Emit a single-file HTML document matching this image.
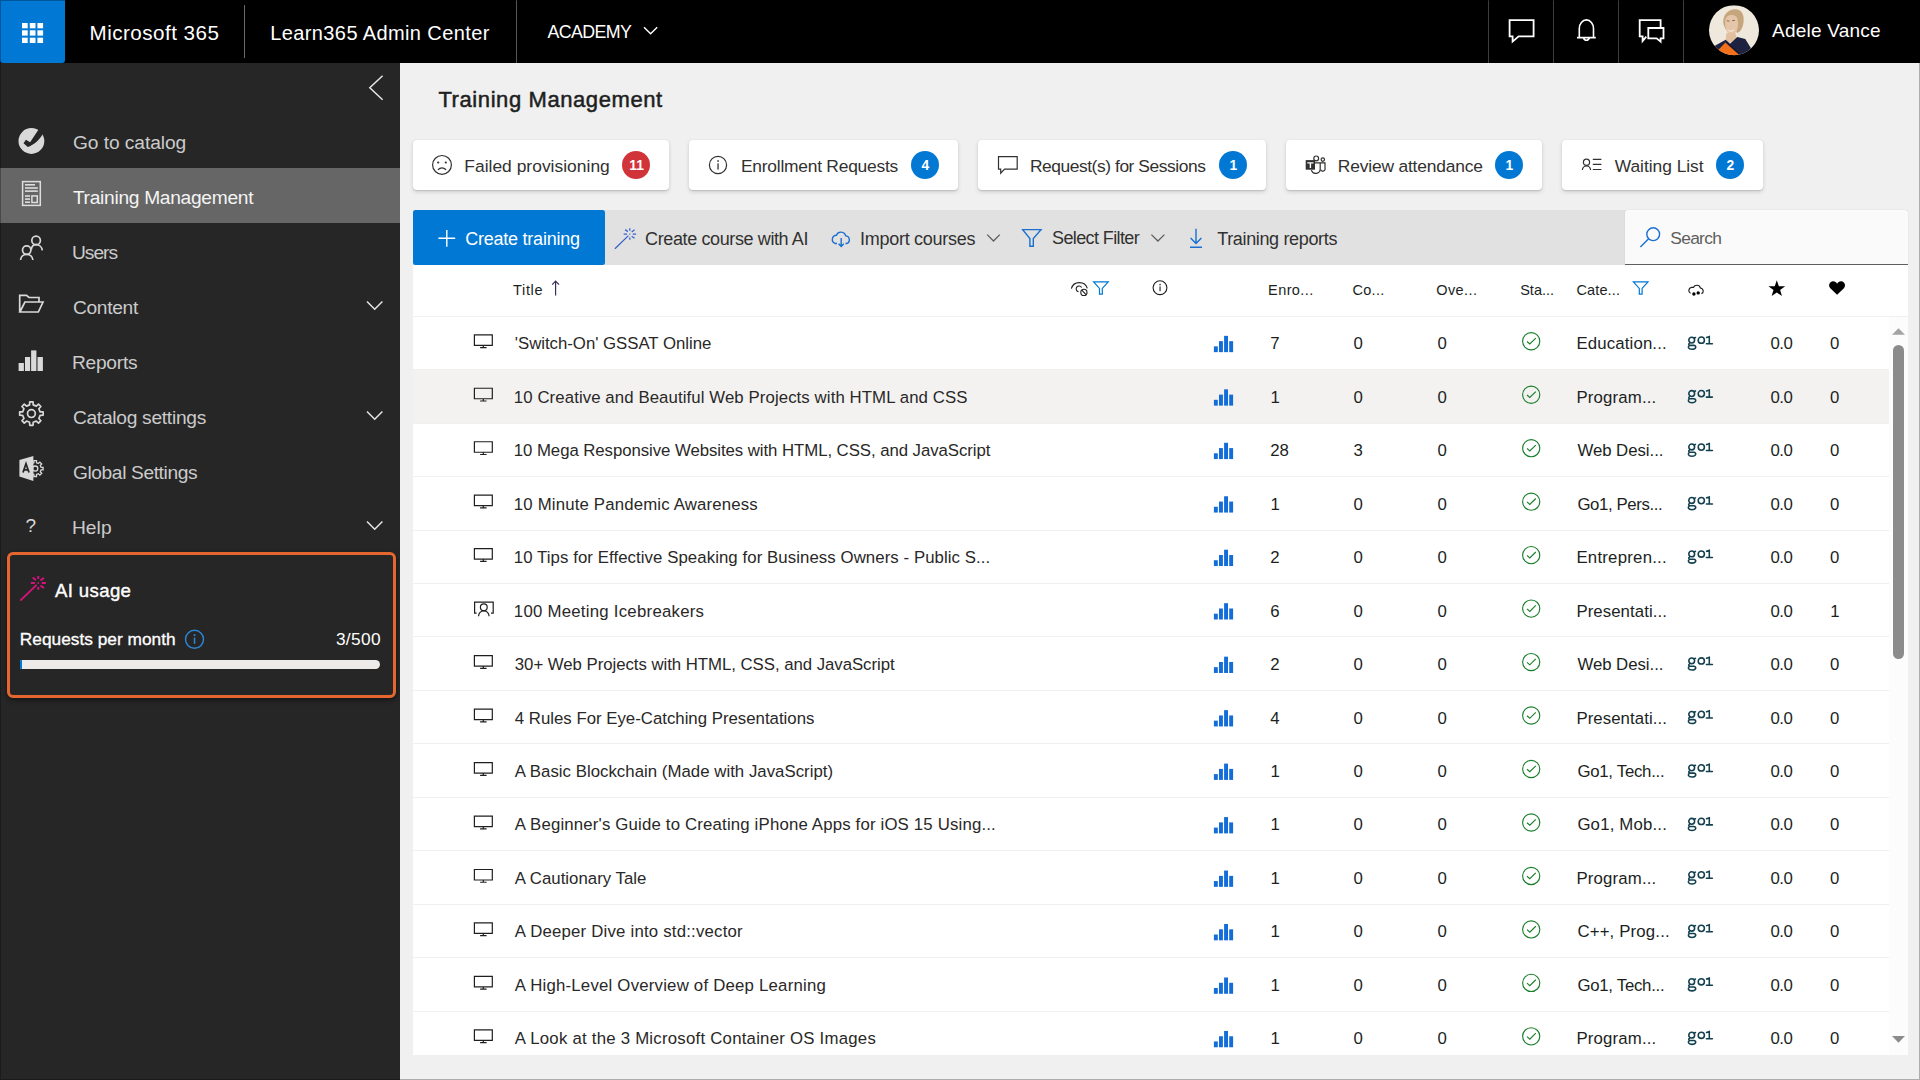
<!DOCTYPE html>
<html><head><meta charset="utf-8"><title>Training Management</title>
<style>
*{box-sizing:border-box;margin:0;padding:0}
html,body{width:1920px;height:1080px;overflow:hidden;background:#f0f0f0;font-family:"Liberation Sans",sans-serif;}
.t{position:absolute;white-space:pre;}
.a{position:absolute;}
svg{position:absolute;overflow:visible}
</style></head><body>

<div class="a" style="left:0;top:0;width:1920px;height:62.6px;background:#000"></div>
<div class="a" style="left:0;top:0;width:65px;height:62.6px;background:#0078d4;border-radius:0 0 3px 3px"></div>
<svg style="left:0;top:0" width="65" height="62"><rect x="22" y="23" width="5.7" height="5.3" fill="#fff"/><rect x="29.8" y="23" width="5.7" height="5.3" fill="#fff"/><rect x="37.4" y="23" width="5.7" height="5.3" fill="#fff"/><rect x="22" y="30.3" width="5.7" height="5.3" fill="#fff"/><rect x="29.8" y="30.3" width="5.7" height="5.3" fill="#fff"/><rect x="37.4" y="30.3" width="5.7" height="5.3" fill="#fff"/><rect x="22" y="37.7" width="5.7" height="5.3" fill="#fff"/><rect x="29.8" y="37.7" width="5.7" height="5.3" fill="#fff"/><rect x="37.4" y="37.7" width="5.7" height="5.3" fill="#fff"/></svg>
<span class="t" style="left:89.50px;top:19.36px;font-size:20.6px;line-height:27px;color:#fff;letter-spacing:0.487px;">Microsoft 365</span>
<div class="a" style="left:244px;top:5px;width:1px;height:53px;background:#6a6a6a"></div>
<span class="t" style="left:270.25px;top:19.57px;font-size:20px;line-height:26px;color:#fff;letter-spacing:0.390px;">Learn365 Admin Center</span>
<div class="a" style="left:516px;top:0;width:1px;height:62.6px;background:#555"></div>
<span class="t" style="left:547.50px;top:20.93px;font-size:17.8px;line-height:23px;color:#fff;letter-spacing:-0.596px;">ACADEMY</span>
<svg style="left:0;top:0" width="700" height="62"><path d="M644 27.3 L650.6 33.8 L657.2 27.3" fill="none" stroke="#fff" stroke-width="1.4"/></svg>
<div class="a" style="left:1488px;top:0;width:1px;height:62.6px;background:#3d3d3d"></div>
<div class="a" style="left:1553px;top:0;width:1px;height:62.6px;background:#3d3d3d"></div>
<div class="a" style="left:1618px;top:0;width:1px;height:62.6px;background:#3d3d3d"></div>
<div class="a" style="left:1683px;top:0;width:1px;height:62.6px;background:#3d3d3d"></div>
<svg style="left:0;top:0" width="1920" height="62" fill="none" stroke="#fff" stroke-width="1.8" stroke-linejoin="miter">
<path d="M1509.6 20.2 H1533.6 V36.4 H1518.6 L1512.6 41.6 V36.4 H1509.6 Z"/>
<path d="M1579.3 37.4 V28.5 A7.1 8.6 0 0 1 1593.5 28.5 V37.4 M1577 37.6 H1595.8 M1583.6 38 A2.9 3 0 0 0 1589.2 38" stroke-width="1.6"/>
<path d="M1660.6 27.6 V20.2 H1639.7 V36.4 H1642.6 V41 L1646.3 36.6 M1648.3 28 H1663.5 V38.4 H1660.6 V41.6 L1656.6 38.4 H1648.3 Z"/>
</svg>
<svg style="left:1709px;top:4.8px" width="50" height="50.4" viewBox="0 0 50 50">
<defs><clipPath id="av"><circle cx="25" cy="25" r="25"/></clipPath><filter id="bl" x="-20%" y="-20%" width="140%" height="140%"><feGaussianBlur stdDeviation="0.7"/></filter></defs>
<g clip-path="url(#av)">
<rect width="50" height="50" fill="#efe8dd"/>
<g filter="url(#bl)">
<path d="M14.5 19 C13 9 20 3.5 27 4 C33 4.5 35.5 10 34.5 17 C34 22 32 26 29 27.5 L16.5 24 Z" fill="#c6a67c"/>
<path d="M16.3 15 C17 9.5 24 8.5 27.5 11.5 C29.5 15 29.5 22 27.5 26 C25.5 29.5 21 30 18.6 27.5 C16.5 24.5 15.8 19 16.3 15Z" fill="#e6c6aa"/>
<path d="M17.5 28 L26 27 L28 33 L20 38 L16.5 35Z" fill="#e2bf9f"/>
<path d="M18.6 24.3 C20.5 26 23.5 25.8 25.3 23.6 C24.8 27 20 27.6 18.6 24.3Z" fill="#f6eee6"/>
<path d="M17.8 15.6 L20.4 15.9 M23.2 15.4 L26 15.2" stroke="#8a6b4e" stroke-width="1"/>
<path d="M5 41 L16.7 34.6 L21 38.5 L28.3 31.7 L36.3 33.7 L42 43 L36 52 L8 52 Z" fill="#1e2440"/>
<path d="M9.5 44.5 L16.9 36.8 L30 48.5 L26 53 L14 53 Z" fill="#f2701f"/>
<path d="M16.9 36.8 L30 48.5" stroke="#14182c" stroke-width="1.6"/>
</g>
</g></svg>
<span class="t" style="left:1772.00px;top:18.42px;font-size:19px;line-height:25px;color:#fff;letter-spacing:0.223px;">Adele Vance</span>
<div class="a" style="left:0;top:62.6px;width:400px;height:1018px;background:#262626;overflow:hidden"><div class="a" style="left:7px;top:489.4px;width:389px;height:146px;border:3px solid #e5662f;border-radius:6px;box-shadow:0 2px 5px rgba(0,0,0,.5)"></div></div>
<div class="a" style="left:0;top:168px;width:400px;height:55px;background:#666"></div>
<svg style="left:0;top:0" width="400" height="120"><path d="M382.6 75.8 L369.8 87.8 L382.6 99.8" fill="none" stroke="#e6e6e6" stroke-width="1.5"/></svg>
<span class="t" style="left:72.90px;top:129.75px;font-size:19.2px;line-height:25px;color:#cbcbcb;letter-spacing:-0.063px;">Go to catalog</span>
<span class="t" style="left:72.90px;top:184.75px;font-size:19.2px;line-height:25px;color:#f4f4f4;letter-spacing:-0.295px;">Training Management</span>
<span class="t" style="left:71.90px;top:239.75px;font-size:19.2px;line-height:25px;color:#cbcbcb;letter-spacing:-0.978px;">Users</span>
<span class="t" style="left:72.90px;top:294.75px;font-size:19.2px;line-height:25px;color:#cbcbcb;letter-spacing:-0.295px;">Content</span>
<span class="t" style="left:71.90px;top:349.75px;font-size:19.2px;line-height:25px;color:#cbcbcb;letter-spacing:-0.248px;">Reports</span>
<span class="t" style="left:72.90px;top:404.75px;font-size:19.2px;line-height:25px;color:#cbcbcb;letter-spacing:-0.280px;">Catalog settings</span>
<span class="t" style="left:72.90px;top:459.75px;font-size:19.2px;line-height:25px;color:#cbcbcb;letter-spacing:-0.388px;">Global Settings</span>
<span class="t" style="left:71.90px;top:514.75px;font-size:19.2px;line-height:25px;color:#cbcbcb;letter-spacing:0.103px;">Help</span>
<svg style="left:0;top:0" width="400" height="600"><path d="M367 301.5 L374.7 309.2 L382.4 301.5" fill="none" stroke="#e6e6e6" stroke-width="1.5"/></svg>
<svg style="left:0;top:0" width="400" height="600"><path d="M367 411.5 L374.7 419.2 L382.4 411.5" fill="none" stroke="#e6e6e6" stroke-width="1.5"/></svg>
<svg style="left:0;top:0" width="400" height="600"><path d="M367 521.5 L374.7 529.2 L382.4 521.5" fill="none" stroke="#e6e6e6" stroke-width="1.5"/></svg>
<svg style="left:0;top:0" width="400" height="560"><circle cx="31.4" cy="141" r="12.9" fill="#d9d9d9"/><path d="M39.4 128.2 L30.1 142.3 L25.9 139.7 L23.5 143.3 L27.8 147.1 C33.5 145 39.2 140.2 42.6 134.2 L46 131 L42 126 Z" fill="#262626"/><g fill="none" stroke="#dedede" stroke-width="1.5"><rect x="22.6" y="181.6" width="17.7" height="23.8"/></g><g fill="#dedede"><rect x="25" y="184" width="10" height="1.6"/><rect x="25" y="187.2" width="12.8" height="1.6"/><rect x="25" y="190.3" width="12.8" height="1.6"/><rect x="25" y="195.2" width="5" height="1.6"/><rect x="25" y="198.3" width="5" height="1.6"/><rect x="25" y="201.4" width="5" height="1.6"/></g><rect x="31.9" y="195.9" width="5.4" height="6.6" fill="none" stroke="#dedede" stroke-width="1.5"/><g fill="none" stroke="#d9d9d9" stroke-width="1.7"><circle cx="36.1" cy="240.4" r="4.3"/><path d="M31.3 249.5 C31.6 246.6 33.6 244.7 36.1 244.7 C39.3 244.7 42 247 42.3 250.4"/><circle cx="26.7" cy="250.1" r="4.2"/><path d="M20.5 260 C20.8 256.6 23.5 254.3 26.7 254.3 C29.9 254.3 32.6 256.6 32.9 260"/></g><path d="M19.7 312 V295.3 H26.5 L29 297.5 H39 V301.8 M19.9 312 L24.9 302 H43 L38.3 312 Z" fill="none" stroke="#d9d9d9" stroke-width="1.7" stroke-linejoin="miter"/><g fill="#d9d9d9"><rect x="18.6" y="363" width="5.3" height="8"/><rect x="25" y="357" width="5.1" height="14"/><rect x="31.1" y="350.4" width="5.3" height="20.6"/><rect x="37.5" y="357" width="5.4" height="14"/></g><path d="M29.60 404.88 L29.73 401.87 L33.07 401.87 L33.20 404.88 L36.29 406.16 L38.51 404.12 L40.88 406.49 L38.84 408.71 L40.12 411.80 L43.13 411.93 L43.13 415.27 L40.12 415.40 L38.84 418.49 L40.88 420.71 L38.51 423.08 L36.29 421.04 L33.20 422.32 L33.07 425.33 L29.73 425.33 L29.60 422.32 L26.51 421.04 L24.29 423.08 L21.92 420.71 L23.96 418.49 L22.68 415.40 L19.67 415.27 L19.67 411.93 L22.68 411.80 L23.96 408.71 L21.92 406.49 L24.29 404.12 L26.51 406.16Z" fill="none" stroke="#d9d9d9" stroke-width="1.7" stroke-linejoin="round"/><circle cx="31.4" cy="413.6" r="3.9" fill="none" stroke="#d9d9d9" stroke-width="1.7"/><g><path d="M33.85 462.75 L33.89 460.71 L36.51 460.71 L36.55 462.75 L38.38 463.51 L39.85 462.09 L41.71 463.95 L40.29 465.42 L41.05 467.25 L43.09 467.29 L43.09 469.91 L41.05 469.95 L40.29 471.78 L41.71 473.25 L39.85 475.11 L38.38 473.69 L36.55 474.45 L36.51 476.49 L33.89 476.49 L33.85 474.45 L32.02 473.69 L30.55 475.11 L28.69 473.25 L30.11 471.78 L29.35 469.95 L27.31 469.91 L27.31 467.29 L29.35 467.25 L30.11 465.42 L28.69 463.95 L30.55 462.09 L32.02 463.51Z" fill="none" stroke="#d9d9d9" stroke-width="1.3"/><circle cx="35.2" cy="468.6" r="2.6" fill="none" stroke="#d9d9d9" stroke-width="1.3"/><path d="M19.4 460 L33.4 456 V481 L19.4 476.4Z" fill="#d9d9d9"/><path d="M23 472.5 L26 463.8 L29 472.5 M24.1 469.8 H27.9" fill="none" stroke="#262626" stroke-width="1.8"/></g></svg><span class="t" style="left:25.6px;top:512.5px;font-size:19px;line-height:25px;color:#d9d9d9">?</span>
<svg style="left:0;top:0" width="400" height="700"><path d="M20.30 600.60 L36.60 584.85 M38.26 576.00 L38.26 578.90 M38.26 587.10 L38.26 589.85 M30.85 583.00 L34.90 583.00 M41.80 583.00 L45.85 583.00 M32.70 577.60 L35.85 580.00 M44.00 577.80 L40.50 580.40 M40.50 585.60 L44.00 588.00 M37.60 583.00 L38.90 583.00" stroke="#d8127d" stroke-width="1.9" fill="none"/></svg>
<span class="t" style="left:55.10px;top:579.46px;font-size:18.6px;line-height:24px;color:#fff;letter-spacing:0.349px;-webkit-text-stroke:0.4px #fff;">AI usage</span>
<span class="t" style="left:19.80px;top:628.11px;font-size:17.3px;line-height:22px;color:#fff;letter-spacing:0.011px;-webkit-text-stroke:0.32px #fff;">Requests per month</span>
<svg style="left:0;top:0" width="400" height="700"><circle cx="194.5" cy="639.3" r="9" fill="none" stroke="#2b88d8" stroke-width="1.4"/><rect x="193.8" y="637.5" width="1.5" height="6.3" fill="#2b88d8"/><rect x="193.7" y="634.2" width="1.7" height="1.8" fill="#2b88d8"/></svg>
<span class="t" style="left:335.90px;top:628.11px;font-size:17.3px;line-height:22px;color:#fff;letter-spacing:0.366px;">3/500</span>
<div class="a" style="left:20px;top:660px;width:360px;height:9px;border-radius:1px 4.5px 4.5px 1px;background:#edebe9;overflow:hidden"><div style="width:2.2px;height:9px;background:#0078d4"></div></div>
<span class="t" style="left:438.40px;top:84.78px;font-size:22px;line-height:29px;color:#201f1e;letter-spacing:0.590px;-webkit-text-stroke:0.5px #201f1e;">Training Management</span>
<div class="a" style="left:413px;top:140px;width:256px;height:49.7px;background:#fff;border-radius:4px;box-shadow:0 2px 4.5px rgba(0,0,0,.14),0 .4px 1.1px rgba(0,0,0,.11)"></div>
<span class="t" style="left:464.30px;top:154.87px;font-size:17.4px;line-height:23px;color:#323130;letter-spacing:0.026px;">Failed provisioning</span>
<div class="a" style="left:622px;top:151px;width:28px;height:28px;border-radius:14px;background:#d13438"></div>
<span class="t" style="left:629.30px;top:156.52px;font-size:13.8px;line-height:18px;color:#fff;font-weight:700;">11</span>
<div class="a" style="left:689px;top:140px;width:269px;height:49.7px;background:#fff;border-radius:4px;box-shadow:0 2px 4.5px rgba(0,0,0,.14),0 .4px 1.1px rgba(0,0,0,.11)"></div>
<span class="t" style="left:741.00px;top:154.87px;font-size:17.4px;line-height:23px;color:#323130;letter-spacing:-0.235px;">Enrollment Requests</span>
<div class="a" style="left:911px;top:151px;width:28px;height:28px;border-radius:14px;background:#0078d4"></div>
<span class="t" style="left:921.55px;top:156.52px;font-size:13.8px;line-height:18px;color:#fff;font-weight:700;">4</span>
<div class="a" style="left:978px;top:140px;width:288px;height:49.7px;background:#fff;border-radius:4px;box-shadow:0 2px 4.5px rgba(0,0,0,.14),0 .4px 1.1px rgba(0,0,0,.11)"></div>
<span class="t" style="left:1029.90px;top:154.87px;font-size:17.4px;line-height:23px;color:#323130;letter-spacing:-0.435px;">Request(s) for Sessions</span>
<div class="a" style="left:1219px;top:151px;width:28px;height:28px;border-radius:14px;background:#0078d4"></div>
<span class="t" style="left:1229.55px;top:156.52px;font-size:13.8px;line-height:18px;color:#fff;font-weight:700;">1</span>
<div class="a" style="left:1286px;top:140px;width:256px;height:49.7px;background:#fff;border-radius:4px;box-shadow:0 2px 4.5px rgba(0,0,0,.14),0 .4px 1.1px rgba(0,0,0,.11)"></div>
<span class="t" style="left:1337.80px;top:154.87px;font-size:17.4px;line-height:23px;color:#323130;letter-spacing:-0.171px;">Review attendance</span>
<div class="a" style="left:1495px;top:151px;width:28px;height:28px;border-radius:14px;background:#0078d4"></div>
<span class="t" style="left:1505.55px;top:156.52px;font-size:13.8px;line-height:18px;color:#fff;font-weight:700;">1</span>
<div class="a" style="left:1562px;top:140px;width:201px;height:49.7px;background:#fff;border-radius:4px;box-shadow:0 2px 4.5px rgba(0,0,0,.14),0 .4px 1.1px rgba(0,0,0,.11)"></div>
<span class="t" style="left:1614.70px;top:154.87px;font-size:17.4px;line-height:23px;color:#323130;letter-spacing:-0.028px;">Waiting List</span>
<div class="a" style="left:1716px;top:151px;width:28px;height:28px;border-radius:14px;background:#0078d4"></div>
<span class="t" style="left:1726.55px;top:156.52px;font-size:13.8px;line-height:18px;color:#fff;font-weight:700;">2</span>
<svg style="left:0;top:0" width="1920" height="200" fill="none" stroke="#323130" stroke-width="1.2"><circle cx="442" cy="164.9" r="9.4"/><circle cx="438.2" cy="162.5" r="1.1" fill="#323130" stroke="none"/><circle cx="445.8" cy="162.5" r="1.1" fill="#323130" stroke="none"/><path d="M437.9 169.7 Q442 165.9 446.1 169.7"/><circle cx="718" cy="165" r="8.6"/><rect x="717.4" y="163.4" width="1.3" height="6.2" fill="#323130" stroke="none"/><rect x="717.3" y="160.2" width="1.5" height="1.6" fill="#323130" stroke="none"/><path d="M998.5 156.6 H1017.2 V169.1 H1004.6 L1000.7 173.2 V169.1 H998.5 Z"/><rect x="1305.7" y="160.1" width="9.3" height="9.6" fill="#323130" stroke="none"/><path d="M1307.3 162.9 H1313.5 M1310.4 162.9 V168" stroke="#fff" stroke-width="1.4"/><circle cx="1316.2" cy="158.4" r="2.4"/><circle cx="1322.8" cy="159.6" r="1.7"/><path d="M1315 162.9 H1320.2 V168.6 A4.5 4.5 0 0 1 1311.4 170.2"/><path d="M1320.4 162.9 H1325 V168 A2.3 2.3 0 0 1 1320.6 169.6"/><circle cx="1586.5" cy="162.3" r="3.1"/><path d="M1582.4 170 C1582.6 167.4 1584.3 166 1586.5 166 C1588.7 166 1590.3 167.4 1590.6 170"/><path d="M1592.8 159.4 H1601.4 M1592.8 164.4 H1601.4 M1592.8 169.5 H1601.4"/></svg>
<div class="a" style="left:413px;top:210px;width:1495px;height:54.7px;background:#e1e1e1"></div>
<div class="a" style="left:413px;top:210px;width:192px;height:54.7px;background:#0078d4;border-radius:2.5px"></div>
<svg style="left:0;top:0" width="700" height="300"><path d="M438.4 238.3 H455.2 M446.8 229.9 V246.7" stroke="#fff" stroke-width="1.4" fill="none"/></svg>
<span class="t" style="left:465.20px;top:228.06px;font-size:18px;line-height:23px;color:#fff;letter-spacing:-0.232px;">Create training</span>
<span class="t" style="left:645.10px;top:228.06px;font-size:18px;line-height:23px;color:#323130;letter-spacing:-0.384px;">Create course with AI</span>
<span class="t" style="left:860.10px;top:228.06px;font-size:18px;line-height:23px;color:#323130;letter-spacing:-0.288px;">Import courses</span>
<span class="t" style="left:1052.00px;top:227.46px;font-size:18px;line-height:23px;color:#323130;letter-spacing:-0.611px;">Select Filter</span>
<span class="t" style="left:1217.20px;top:228.06px;font-size:18px;line-height:23px;color:#323130;letter-spacing:-0.346px;">Training reports</span>
<div class="a" style="left:1625px;top:210px;width:283px;height:54.7px;background:#fafafa;border-radius:3px 3px 0 0;border-bottom:1.4px solid #605e5c;box-shadow:0 0 2px rgba(0,0,0,.08)"></div>
<span class="t" style="left:1670.30px;top:226.87px;font-size:17.4px;line-height:23px;color:#605e5c;letter-spacing:-0.706px;">Search</span>
<svg style="left:0;top:0" width="1920" height="300" fill="none"><path d="M614.90 248.72 L628.43 235.65 M629.81 228.30 L629.81 230.71 M629.81 237.51 L629.81 239.80 M623.66 234.11 L627.02 234.11 M632.75 234.11 L636.11 234.11 M625.19 229.63 L627.81 231.62 M634.57 229.79 L631.67 231.95 M631.67 236.27 L634.57 238.26 M629.26 234.11 L630.34 234.11" stroke="#3a63c9" stroke-width="1.3" fill="none"/><g stroke="#1a6fd0" stroke-width="1.4"><path d="M837 243.5 H835.3 A4.25 4.25 0 0 1 836.4 235.2 A4.9 4.9 0 0 1 845.7 235.9 A3.85 3.85 0 0 1 846.3 243.5 H845.5 M841.2 238 V246.3 M838.6 243.8 L841.2 246.4 L843.8 243.8"/><path d="M1022.7 229.6 H1041 L1033.3 238.5 V246.3 H1029.9 V238.5 Z"/><path d="M1196 228.7 V243.3 M1190.6 238 L1196 243.5 L1201.4 238 M1190 247.2 H1202"/><circle cx="1653.2" cy="234.2" r="6.4"/><path d="M1648.6 238.8 L1640.4 247"/></g><g stroke="#605e5c" stroke-width="1.3"><path d="M987.2 234.6 L993.5 241 L999.8 234.6"/><path d="M1151.4 234.6 L1157.9 241 L1164.4 234.6"/></g></svg>
<div class="a" style="left:413px;top:264.7px;width:1495px;height:790.3px;background:#fff"></div>
<div class="a" style="left:1889px;top:316px;width:19px;height:739px;background:#fcfcfc"></div>
<span class="t" style="left:513.10px;top:280.68px;font-size:14.5px;line-height:19px;color:#201f1e;letter-spacing:0.652px;">Title</span>
<span class="t" style="left:1268.10px;top:280.68px;font-size:14.5px;line-height:19px;color:#201f1e;letter-spacing:0.402px;">Enro...</span>
<span class="t" style="left:1352.50px;top:280.68px;font-size:14.5px;line-height:19px;color:#201f1e;letter-spacing:0.277px;">Co...</span>
<span class="t" style="left:1436.30px;top:280.68px;font-size:14.5px;line-height:19px;color:#201f1e;letter-spacing:0.390px;">Ove...</span>
<span class="t" style="left:1520.20px;top:280.68px;font-size:14.5px;line-height:19px;color:#201f1e;letter-spacing:-0.004px;">Sta...</span>
<span class="t" style="left:1576.50px;top:280.68px;font-size:14.5px;line-height:19px;color:#201f1e;letter-spacing:0.119px;">Cate...</span>
<svg style="left:0;top:0" width="1920" height="320" fill="none"><path d="M555.6 295.6 V281 M552.2 284.6 L555.6 281.1 L559 284.6" stroke="#3b2e58" stroke-width="1.2"/><g stroke="#201f1e" stroke-width="1.1"><path d="M1071.4 288.6 C1072.4 284.8 1075.6 282.6 1079.3 282.6 C1083 282.6 1086.3 284.8 1087.3 288.4"/><path d="M1081.6 287.4 A2.9 2.9 0 1 0 1078.6 291.7"/><circle cx="1083.9" cy="292.4" r="3.1"/><path d="M1081.8 290.2 L1086 294.6"/></g><path d="M1093.6 281.8 H1108.2 L1102.3 288.4 V294.2 H1099.5 V288.4 Z" stroke="#0078d4" stroke-width="1.2"/><path d="M1633.3999999999999 281.8 H1648.0 L1642.1 288.4 V294.2 H1639.3 V288.4 Z" stroke="#0078d4" stroke-width="1.2"/><circle cx="1160" cy="287.7" r="6.9" stroke="#201f1e" stroke-width="1.1"/><rect x="1159.5" y="286.4" width="1.1" height="4.8" fill="#201f1e"/><rect x="1159.4" y="283.9" width="1.3" height="1.4" fill="#201f1e"/><path d="M1690.6 293.3 C1688.2 292.2 1688 288.2 1691.4 287.4 L1693.4 287.4 C1694.6 284.6 1699.6 284.4 1700.3 287.8 C1703.8 288.6 1704.2 292.4 1701.4 293.6" stroke="#201f1e" stroke-width="1.2"/><circle cx="1693.9" cy="294" r="1.7" fill="#000"/><circle cx="1698.2" cy="292.9" r="1.7" fill="#000"/><path d="M1776.80 280.20 L1778.86 286.17 L1785.17 286.28 L1780.13 290.08 L1781.97 296.12 L1776.80 292.50 L1771.63 296.12 L1773.47 290.08 L1768.43 286.28 L1774.74 286.17Z" fill="#000"/><path d="M1837.1 294.8 L1830.3 288.2 C1827.6 285.2 1830 281 1833.2 281.2 C1835 281.3 1836.4 282.4 1837.1 283.8 C1837.8 282.4 1839.2 281.3 1841 281.2 C1844.2 281 1846.6 285.2 1843.9 288.2 Z" fill="#000"/></svg>
<div class="a" style="left:413px;top:264.7px;width:1495px;height:790.3px;overflow:hidden">
<div class="a" style="left:0;top:104.42px;width:1476px;height:53.47px;background:#f3f2f1"></div>
<div class="a" style="left:0;top:50.95px;width:1495px;height:1px;background:#f1f0ef"></div>
<div class="a" style="left:0;top:104.42px;width:1476px;height:1px;background:#f1f0ef"></div>
<div class="a" style="left:0;top:157.89px;width:1476px;height:1px;background:#f1f0ef"></div>
<div class="a" style="left:0;top:211.36px;width:1476px;height:1px;background:#f1f0ef"></div>
<div class="a" style="left:0;top:264.83px;width:1476px;height:1px;background:#f1f0ef"></div>
<div class="a" style="left:0;top:318.30px;width:1476px;height:1px;background:#f1f0ef"></div>
<div class="a" style="left:0;top:371.77px;width:1476px;height:1px;background:#f1f0ef"></div>
<div class="a" style="left:0;top:425.24px;width:1476px;height:1px;background:#f1f0ef"></div>
<div class="a" style="left:0;top:478.71px;width:1476px;height:1px;background:#f1f0ef"></div>
<div class="a" style="left:0;top:532.18px;width:1476px;height:1px;background:#f1f0ef"></div>
<div class="a" style="left:0;top:585.65px;width:1476px;height:1px;background:#f1f0ef"></div>
<div class="a" style="left:0;top:639.12px;width:1476px;height:1px;background:#f1f0ef"></div>
<div class="a" style="left:0;top:692.59px;width:1476px;height:1px;background:#f1f0ef"></div>
<div class="a" style="left:0;top:746.06px;width:1476px;height:1px;background:#f1f0ef"></div>
<div class="a" style="left:0;top:799.53px;width:1476px;height:1px;background:#f1f0ef"></div>
</div>
<span class="t" style="left:514.80px;top:333.23px;font-size:16.8px;line-height:22px;color:#292827;letter-spacing:-0.019px;">&#x27;Switch-On&#x27; GSSAT Online</span>
<span class="t" style="left:1270.20px;top:333.23px;font-size:16.8px;line-height:22px;color:#201f1e;">7</span>
<span class="t" style="left:1353.50px;top:333.23px;font-size:16.8px;line-height:22px;color:#201f1e;">0</span>
<span class="t" style="left:1437.50px;top:333.23px;font-size:16.8px;line-height:22px;color:#201f1e;">0</span>
<span class="t" style="left:1576.40px;top:333.23px;font-size:16.8px;line-height:22px;color:#201f1e;letter-spacing:0.149px;">Education...</span>
<span class="t" style="left:1770.40px;top:333.23px;font-size:16.8px;line-height:22px;color:#201f1e;letter-spacing:-0.448px;">0.0</span>
<span class="t" style="left:1830.00px;top:333.23px;font-size:16.8px;line-height:22px;color:#201f1e;">0</span>
<span class="t" style="left:513.80px;top:386.70px;font-size:16.8px;line-height:22px;color:#292827;letter-spacing:0.091px;">10 Creative and Beautiful Web Projects with HTML and CSS</span>
<span class="t" style="left:1270.50px;top:386.70px;font-size:16.8px;line-height:22px;color:#201f1e;">1</span>
<span class="t" style="left:1353.50px;top:386.70px;font-size:16.8px;line-height:22px;color:#201f1e;">0</span>
<span class="t" style="left:1437.50px;top:386.70px;font-size:16.8px;line-height:22px;color:#201f1e;">0</span>
<span class="t" style="left:1576.40px;top:386.70px;font-size:16.8px;line-height:22px;color:#201f1e;letter-spacing:0.170px;">Program...</span>
<span class="t" style="left:1770.40px;top:386.70px;font-size:16.8px;line-height:22px;color:#201f1e;letter-spacing:-0.448px;">0.0</span>
<span class="t" style="left:1830.00px;top:386.70px;font-size:16.8px;line-height:22px;color:#201f1e;">0</span>
<span class="t" style="left:513.80px;top:440.17px;font-size:16.8px;line-height:22px;color:#292827;letter-spacing:-0.061px;">10 Mega Responsive Websites with HTML, CSS, and JavaScript</span>
<span class="t" style="left:1270.20px;top:440.17px;font-size:16.8px;line-height:22px;color:#201f1e;">28</span>
<span class="t" style="left:1353.50px;top:440.17px;font-size:16.8px;line-height:22px;color:#201f1e;">3</span>
<span class="t" style="left:1437.50px;top:440.17px;font-size:16.8px;line-height:22px;color:#201f1e;">0</span>
<span class="t" style="left:1577.40px;top:440.17px;font-size:16.8px;line-height:22px;color:#201f1e;letter-spacing:-0.036px;">Web Desi...</span>
<span class="t" style="left:1770.40px;top:440.17px;font-size:16.8px;line-height:22px;color:#201f1e;letter-spacing:-0.448px;">0.0</span>
<span class="t" style="left:1830.00px;top:440.17px;font-size:16.8px;line-height:22px;color:#201f1e;">0</span>
<span class="t" style="left:513.80px;top:493.64px;font-size:16.8px;line-height:22px;color:#292827;letter-spacing:0.168px;">10 Minute Pandemic Awareness</span>
<span class="t" style="left:1270.50px;top:493.64px;font-size:16.8px;line-height:22px;color:#201f1e;">1</span>
<span class="t" style="left:1353.50px;top:493.64px;font-size:16.8px;line-height:22px;color:#201f1e;">0</span>
<span class="t" style="left:1437.50px;top:493.64px;font-size:16.8px;line-height:22px;color:#201f1e;">0</span>
<span class="t" style="left:1577.40px;top:493.64px;font-size:16.8px;line-height:22px;color:#201f1e;letter-spacing:-0.388px;">Go1, Pers...</span>
<span class="t" style="left:1770.40px;top:493.64px;font-size:16.8px;line-height:22px;color:#201f1e;letter-spacing:-0.448px;">0.0</span>
<span class="t" style="left:1830.00px;top:493.64px;font-size:16.8px;line-height:22px;color:#201f1e;">0</span>
<span class="t" style="left:513.80px;top:547.11px;font-size:16.8px;line-height:22px;color:#292827;letter-spacing:0.076px;">10 Tips for Effective Speaking for Business Owners - Public S...</span>
<span class="t" style="left:1270.20px;top:547.11px;font-size:16.8px;line-height:22px;color:#201f1e;">2</span>
<span class="t" style="left:1353.50px;top:547.11px;font-size:16.8px;line-height:22px;color:#201f1e;">0</span>
<span class="t" style="left:1437.50px;top:547.11px;font-size:16.8px;line-height:22px;color:#201f1e;">0</span>
<span class="t" style="left:1576.40px;top:547.11px;font-size:16.8px;line-height:22px;color:#201f1e;letter-spacing:0.234px;">Entrepren...</span>
<span class="t" style="left:1770.40px;top:547.11px;font-size:16.8px;line-height:22px;color:#201f1e;letter-spacing:-0.448px;">0.0</span>
<span class="t" style="left:1830.00px;top:547.11px;font-size:16.8px;line-height:22px;color:#201f1e;">0</span>
<span class="t" style="left:513.80px;top:600.58px;font-size:16.8px;line-height:22px;color:#292827;letter-spacing:0.250px;">100 Meeting Icebreakers</span>
<span class="t" style="left:1270.20px;top:600.58px;font-size:16.8px;line-height:22px;color:#201f1e;">6</span>
<span class="t" style="left:1353.50px;top:600.58px;font-size:16.8px;line-height:22px;color:#201f1e;">0</span>
<span class="t" style="left:1437.50px;top:600.58px;font-size:16.8px;line-height:22px;color:#201f1e;">0</span>
<span class="t" style="left:1576.40px;top:600.58px;font-size:16.8px;line-height:22px;color:#201f1e;letter-spacing:0.077px;">Presentati...</span>
<span class="t" style="left:1770.40px;top:600.58px;font-size:16.8px;line-height:22px;color:#201f1e;letter-spacing:-0.448px;">0.0</span>
<span class="t" style="left:1830.30px;top:600.58px;font-size:16.8px;line-height:22px;color:#201f1e;">1</span>
<span class="t" style="left:514.80px;top:654.05px;font-size:16.8px;line-height:22px;color:#292827;letter-spacing:-0.038px;">30+ Web Projects with HTML, CSS, and JavaScript</span>
<span class="t" style="left:1270.20px;top:654.05px;font-size:16.8px;line-height:22px;color:#201f1e;">2</span>
<span class="t" style="left:1353.50px;top:654.05px;font-size:16.8px;line-height:22px;color:#201f1e;">0</span>
<span class="t" style="left:1437.50px;top:654.05px;font-size:16.8px;line-height:22px;color:#201f1e;">0</span>
<span class="t" style="left:1577.40px;top:654.05px;font-size:16.8px;line-height:22px;color:#201f1e;letter-spacing:-0.036px;">Web Desi...</span>
<span class="t" style="left:1770.40px;top:654.05px;font-size:16.8px;line-height:22px;color:#201f1e;letter-spacing:-0.448px;">0.0</span>
<span class="t" style="left:1830.00px;top:654.05px;font-size:16.8px;line-height:22px;color:#201f1e;">0</span>
<span class="t" style="left:514.80px;top:707.52px;font-size:16.8px;line-height:22px;color:#292827;letter-spacing:0.005px;">4 Rules For Eye-Catching Presentations</span>
<span class="t" style="left:1270.20px;top:707.52px;font-size:16.8px;line-height:22px;color:#201f1e;">4</span>
<span class="t" style="left:1353.50px;top:707.52px;font-size:16.8px;line-height:22px;color:#201f1e;">0</span>
<span class="t" style="left:1437.50px;top:707.52px;font-size:16.8px;line-height:22px;color:#201f1e;">0</span>
<span class="t" style="left:1576.40px;top:707.52px;font-size:16.8px;line-height:22px;color:#201f1e;letter-spacing:0.077px;">Presentati...</span>
<span class="t" style="left:1770.40px;top:707.52px;font-size:16.8px;line-height:22px;color:#201f1e;letter-spacing:-0.448px;">0.0</span>
<span class="t" style="left:1830.00px;top:707.52px;font-size:16.8px;line-height:22px;color:#201f1e;">0</span>
<span class="t" style="left:514.80px;top:760.99px;font-size:16.8px;line-height:22px;color:#292827;letter-spacing:0.031px;">A Basic Blockchain (Made with JavaScript)</span>
<span class="t" style="left:1270.50px;top:760.99px;font-size:16.8px;line-height:22px;color:#201f1e;">1</span>
<span class="t" style="left:1353.50px;top:760.99px;font-size:16.8px;line-height:22px;color:#201f1e;">0</span>
<span class="t" style="left:1437.50px;top:760.99px;font-size:16.8px;line-height:22px;color:#201f1e;">0</span>
<span class="t" style="left:1577.40px;top:760.99px;font-size:16.8px;line-height:22px;color:#201f1e;letter-spacing:-0.265px;">Go1, Tech...</span>
<span class="t" style="left:1770.40px;top:760.99px;font-size:16.8px;line-height:22px;color:#201f1e;letter-spacing:-0.448px;">0.0</span>
<span class="t" style="left:1830.00px;top:760.99px;font-size:16.8px;line-height:22px;color:#201f1e;">0</span>
<span class="t" style="left:514.80px;top:814.46px;font-size:16.8px;line-height:22px;color:#292827;letter-spacing:0.170px;">A Beginner&#x27;s Guide to Creating iPhone Apps for iOS 15 Using...</span>
<span class="t" style="left:1270.50px;top:814.46px;font-size:16.8px;line-height:22px;color:#201f1e;">1</span>
<span class="t" style="left:1353.50px;top:814.46px;font-size:16.8px;line-height:22px;color:#201f1e;">0</span>
<span class="t" style="left:1437.50px;top:814.46px;font-size:16.8px;line-height:22px;color:#201f1e;">0</span>
<span class="t" style="left:1577.40px;top:814.46px;font-size:16.8px;line-height:22px;color:#201f1e;letter-spacing:0.179px;">Go1, Mob...</span>
<span class="t" style="left:1770.40px;top:814.46px;font-size:16.8px;line-height:22px;color:#201f1e;letter-spacing:-0.448px;">0.0</span>
<span class="t" style="left:1830.00px;top:814.46px;font-size:16.8px;line-height:22px;color:#201f1e;">0</span>
<span class="t" style="left:514.80px;top:867.93px;font-size:16.8px;line-height:22px;color:#292827;letter-spacing:0.024px;">A Cautionary Tale</span>
<span class="t" style="left:1270.50px;top:867.93px;font-size:16.8px;line-height:22px;color:#201f1e;">1</span>
<span class="t" style="left:1353.50px;top:867.93px;font-size:16.8px;line-height:22px;color:#201f1e;">0</span>
<span class="t" style="left:1437.50px;top:867.93px;font-size:16.8px;line-height:22px;color:#201f1e;">0</span>
<span class="t" style="left:1576.40px;top:867.93px;font-size:16.8px;line-height:22px;color:#201f1e;letter-spacing:0.170px;">Program...</span>
<span class="t" style="left:1770.40px;top:867.93px;font-size:16.8px;line-height:22px;color:#201f1e;letter-spacing:-0.448px;">0.0</span>
<span class="t" style="left:1830.00px;top:867.93px;font-size:16.8px;line-height:22px;color:#201f1e;">0</span>
<span class="t" style="left:514.80px;top:921.40px;font-size:16.8px;line-height:22px;color:#292827;letter-spacing:0.202px;">A Deeper Dive into std::vector</span>
<span class="t" style="left:1270.50px;top:921.40px;font-size:16.8px;line-height:22px;color:#201f1e;">1</span>
<span class="t" style="left:1353.50px;top:921.40px;font-size:16.8px;line-height:22px;color:#201f1e;">0</span>
<span class="t" style="left:1437.50px;top:921.40px;font-size:16.8px;line-height:22px;color:#201f1e;">0</span>
<span class="t" style="left:1577.40px;top:921.40px;font-size:16.8px;line-height:22px;color:#201f1e;letter-spacing:0.162px;">C++, Prog...</span>
<span class="t" style="left:1770.40px;top:921.40px;font-size:16.8px;line-height:22px;color:#201f1e;letter-spacing:-0.448px;">0.0</span>
<span class="t" style="left:1830.00px;top:921.40px;font-size:16.8px;line-height:22px;color:#201f1e;">0</span>
<span class="t" style="left:514.80px;top:974.87px;font-size:16.8px;line-height:22px;color:#292827;letter-spacing:0.212px;">A High-Level Overview of Deep Learning</span>
<span class="t" style="left:1270.50px;top:974.87px;font-size:16.8px;line-height:22px;color:#201f1e;">1</span>
<span class="t" style="left:1353.50px;top:974.87px;font-size:16.8px;line-height:22px;color:#201f1e;">0</span>
<span class="t" style="left:1437.50px;top:974.87px;font-size:16.8px;line-height:22px;color:#201f1e;">0</span>
<span class="t" style="left:1577.40px;top:974.87px;font-size:16.8px;line-height:22px;color:#201f1e;letter-spacing:-0.265px;">Go1, Tech...</span>
<span class="t" style="left:1770.40px;top:974.87px;font-size:16.8px;line-height:22px;color:#201f1e;letter-spacing:-0.448px;">0.0</span>
<span class="t" style="left:1830.00px;top:974.87px;font-size:16.8px;line-height:22px;color:#201f1e;">0</span>
<span class="t" style="left:514.80px;top:1028.34px;font-size:16.8px;line-height:22px;color:#292827;letter-spacing:0.233px;">A Look at the 3 Microsoft Container OS Images</span>
<span class="t" style="left:1270.50px;top:1028.34px;font-size:16.8px;line-height:22px;color:#201f1e;">1</span>
<span class="t" style="left:1353.50px;top:1028.34px;font-size:16.8px;line-height:22px;color:#201f1e;">0</span>
<span class="t" style="left:1437.50px;top:1028.34px;font-size:16.8px;line-height:22px;color:#201f1e;">0</span>
<span class="t" style="left:1576.40px;top:1028.34px;font-size:16.8px;line-height:22px;color:#201f1e;letter-spacing:0.170px;">Program...</span>
<span class="t" style="left:1770.40px;top:1028.34px;font-size:16.8px;line-height:22px;color:#201f1e;letter-spacing:-0.448px;">0.0</span>
<span class="t" style="left:1830.00px;top:1028.34px;font-size:16.8px;line-height:22px;color:#201f1e;">0</span>
<svg style="left:0;top:0" width="1920" height="1080" fill="none"><defs><clipPath id="tb"><rect x="413" y="316" width="1495" height="739"/></clipPath></defs><g clip-path="url(#tb)"><path d="M474.4 334.80 H492.3 V345.30 H474.4 Z M483.3 345.65 V347.25 M480.1 347.55 H486.6" stroke="#201f1e" stroke-width="1.2"/><g fill="#126dd8"><rect x="1213.9" y="346.35" width="3.9" height="5.8"/><rect x="1219" y="341.15" width="3.9" height="11"/><rect x="1224.1" y="335.85" width="3.9" height="16.3"/><rect x="1229.2" y="341.15" width="3.9" height="11"/></g><circle cx="1531.2" cy="341.25" r="8.6" stroke="#1a7f2b" stroke-width="1.15"/><path d="M1527 341.50 L1529.8 344.00 L1535.8 338.10" stroke="#1a7f2b" stroke-width="1.15"/><g transform="translate(1687.40 335.85)" fill="none" stroke="#12404f" stroke-width="1.55" stroke-linecap="round"><circle cx="4.3" cy="4.2" r="2.9"/><path d="M6.6 2.2 L8.1 1.6"/><path d="M2.4 7 C0.6 8 1.2 9.6 3 9.5 L6.4 9.5 C9.4 9.8 9 13.4 4.6 13.4 C0.4 13.4 0.2 10.6 2.2 9.6"/><circle cx="13.9" cy="4.3" r="3.1"/><path d="M19.2 1.6 L21.9 0.7 V7.6 M19 7.8 H25"/></g><path d="M474.4 388.27 H492.3 V398.77 H474.4 Z M483.3 399.12 V400.72 M480.1 401.02 H486.6" stroke="#201f1e" stroke-width="1.2"/><g fill="#126dd8"><rect x="1213.9" y="399.82" width="3.9" height="5.8"/><rect x="1219" y="394.62" width="3.9" height="11"/><rect x="1224.1" y="389.32" width="3.9" height="16.3"/><rect x="1229.2" y="394.62" width="3.9" height="11"/></g><circle cx="1531.2" cy="394.72" r="8.6" stroke="#1a7f2b" stroke-width="1.15"/><path d="M1527 394.97 L1529.8 397.47 L1535.8 391.57" stroke="#1a7f2b" stroke-width="1.15"/><g transform="translate(1687.40 389.32)" fill="none" stroke="#12404f" stroke-width="1.55" stroke-linecap="round"><circle cx="4.3" cy="4.2" r="2.9"/><path d="M6.6 2.2 L8.1 1.6"/><path d="M2.4 7 C0.6 8 1.2 9.6 3 9.5 L6.4 9.5 C9.4 9.8 9 13.4 4.6 13.4 C0.4 13.4 0.2 10.6 2.2 9.6"/><circle cx="13.9" cy="4.3" r="3.1"/><path d="M19.2 1.6 L21.9 0.7 V7.6 M19 7.8 H25"/></g><path d="M474.4 441.74 H492.3 V452.24 H474.4 Z M483.3 452.59 V454.19 M480.1 454.49 H486.6" stroke="#201f1e" stroke-width="1.2"/><g fill="#126dd8"><rect x="1213.9" y="453.29" width="3.9" height="5.8"/><rect x="1219" y="448.09" width="3.9" height="11"/><rect x="1224.1" y="442.79" width="3.9" height="16.3"/><rect x="1229.2" y="448.09" width="3.9" height="11"/></g><circle cx="1531.2" cy="448.19" r="8.6" stroke="#1a7f2b" stroke-width="1.15"/><path d="M1527 448.44 L1529.8 450.94 L1535.8 445.04" stroke="#1a7f2b" stroke-width="1.15"/><g transform="translate(1687.40 442.79)" fill="none" stroke="#12404f" stroke-width="1.55" stroke-linecap="round"><circle cx="4.3" cy="4.2" r="2.9"/><path d="M6.6 2.2 L8.1 1.6"/><path d="M2.4 7 C0.6 8 1.2 9.6 3 9.5 L6.4 9.5 C9.4 9.8 9 13.4 4.6 13.4 C0.4 13.4 0.2 10.6 2.2 9.6"/><circle cx="13.9" cy="4.3" r="3.1"/><path d="M19.2 1.6 L21.9 0.7 V7.6 M19 7.8 H25"/></g><path d="M474.4 495.21 H492.3 V505.71 H474.4 Z M483.3 506.06 V507.66 M480.1 507.96 H486.6" stroke="#201f1e" stroke-width="1.2"/><g fill="#126dd8"><rect x="1213.9" y="506.76" width="3.9" height="5.8"/><rect x="1219" y="501.56" width="3.9" height="11"/><rect x="1224.1" y="496.26" width="3.9" height="16.3"/><rect x="1229.2" y="501.56" width="3.9" height="11"/></g><circle cx="1531.2" cy="501.66" r="8.6" stroke="#1a7f2b" stroke-width="1.15"/><path d="M1527 501.91 L1529.8 504.41 L1535.8 498.51" stroke="#1a7f2b" stroke-width="1.15"/><g transform="translate(1687.40 496.26)" fill="none" stroke="#12404f" stroke-width="1.55" stroke-linecap="round"><circle cx="4.3" cy="4.2" r="2.9"/><path d="M6.6 2.2 L8.1 1.6"/><path d="M2.4 7 C0.6 8 1.2 9.6 3 9.5 L6.4 9.5 C9.4 9.8 9 13.4 4.6 13.4 C0.4 13.4 0.2 10.6 2.2 9.6"/><circle cx="13.9" cy="4.3" r="3.1"/><path d="M19.2 1.6 L21.9 0.7 V7.6 M19 7.8 H25"/></g><path d="M474.4 548.68 H492.3 V559.18 H474.4 Z M483.3 559.53 V561.13 M480.1 561.43 H486.6" stroke="#201f1e" stroke-width="1.2"/><g fill="#126dd8"><rect x="1213.9" y="560.23" width="3.9" height="5.8"/><rect x="1219" y="555.03" width="3.9" height="11"/><rect x="1224.1" y="549.73" width="3.9" height="16.3"/><rect x="1229.2" y="555.03" width="3.9" height="11"/></g><circle cx="1531.2" cy="555.13" r="8.6" stroke="#1a7f2b" stroke-width="1.15"/><path d="M1527 555.38 L1529.8 557.88 L1535.8 551.98" stroke="#1a7f2b" stroke-width="1.15"/><g transform="translate(1687.40 549.73)" fill="none" stroke="#12404f" stroke-width="1.55" stroke-linecap="round"><circle cx="4.3" cy="4.2" r="2.9"/><path d="M6.6 2.2 L8.1 1.6"/><path d="M2.4 7 C0.6 8 1.2 9.6 3 9.5 L6.4 9.5 C9.4 9.8 9 13.4 4.6 13.4 C0.4 13.4 0.2 10.6 2.2 9.6"/><circle cx="13.9" cy="4.3" r="3.1"/><path d="M19.2 1.6 L21.9 0.7 V7.6 M19 7.8 H25"/></g><path d="M476.6 613.20 H474.6 V602.20 H493.2 V613.20 H491" stroke="#201f1e" stroke-width="1.2"/><circle cx="483.8" cy="607.30" r="3.4" stroke="#201f1e" stroke-width="1.2"/><path d="M478.5 616.30 C478.8 612.80 481 611.00 483.8 611.00 C486.6 611.00 488.8 612.80 489.1 616.30" stroke="#201f1e" stroke-width="1.2"/><g fill="#126dd8"><rect x="1213.9" y="613.70" width="3.9" height="5.8"/><rect x="1219" y="608.50" width="3.9" height="11"/><rect x="1224.1" y="603.20" width="3.9" height="16.3"/><rect x="1229.2" y="608.50" width="3.9" height="11"/></g><circle cx="1531.2" cy="608.60" r="8.6" stroke="#1a7f2b" stroke-width="1.15"/><path d="M1527 608.85 L1529.8 611.35 L1535.8 605.45" stroke="#1a7f2b" stroke-width="1.15"/><path d="M474.4 655.62 H492.3 V666.12 H474.4 Z M483.3 666.47 V668.07 M480.1 668.37 H486.6" stroke="#201f1e" stroke-width="1.2"/><g fill="#126dd8"><rect x="1213.9" y="667.17" width="3.9" height="5.8"/><rect x="1219" y="661.97" width="3.9" height="11"/><rect x="1224.1" y="656.67" width="3.9" height="16.3"/><rect x="1229.2" y="661.97" width="3.9" height="11"/></g><circle cx="1531.2" cy="662.07" r="8.6" stroke="#1a7f2b" stroke-width="1.15"/><path d="M1527 662.32 L1529.8 664.82 L1535.8 658.92" stroke="#1a7f2b" stroke-width="1.15"/><g transform="translate(1687.40 656.67)" fill="none" stroke="#12404f" stroke-width="1.55" stroke-linecap="round"><circle cx="4.3" cy="4.2" r="2.9"/><path d="M6.6 2.2 L8.1 1.6"/><path d="M2.4 7 C0.6 8 1.2 9.6 3 9.5 L6.4 9.5 C9.4 9.8 9 13.4 4.6 13.4 C0.4 13.4 0.2 10.6 2.2 9.6"/><circle cx="13.9" cy="4.3" r="3.1"/><path d="M19.2 1.6 L21.9 0.7 V7.6 M19 7.8 H25"/></g><path d="M474.4 709.09 H492.3 V719.59 H474.4 Z M483.3 719.94 V721.54 M480.1 721.84 H486.6" stroke="#201f1e" stroke-width="1.2"/><g fill="#126dd8"><rect x="1213.9" y="720.64" width="3.9" height="5.8"/><rect x="1219" y="715.44" width="3.9" height="11"/><rect x="1224.1" y="710.14" width="3.9" height="16.3"/><rect x="1229.2" y="715.44" width="3.9" height="11"/></g><circle cx="1531.2" cy="715.54" r="8.6" stroke="#1a7f2b" stroke-width="1.15"/><path d="M1527 715.79 L1529.8 718.29 L1535.8 712.39" stroke="#1a7f2b" stroke-width="1.15"/><g transform="translate(1687.40 710.14)" fill="none" stroke="#12404f" stroke-width="1.55" stroke-linecap="round"><circle cx="4.3" cy="4.2" r="2.9"/><path d="M6.6 2.2 L8.1 1.6"/><path d="M2.4 7 C0.6 8 1.2 9.6 3 9.5 L6.4 9.5 C9.4 9.8 9 13.4 4.6 13.4 C0.4 13.4 0.2 10.6 2.2 9.6"/><circle cx="13.9" cy="4.3" r="3.1"/><path d="M19.2 1.6 L21.9 0.7 V7.6 M19 7.8 H25"/></g><path d="M474.4 762.56 H492.3 V773.06 H474.4 Z M483.3 773.41 V775.01 M480.1 775.31 H486.6" stroke="#201f1e" stroke-width="1.2"/><g fill="#126dd8"><rect x="1213.9" y="774.11" width="3.9" height="5.8"/><rect x="1219" y="768.91" width="3.9" height="11"/><rect x="1224.1" y="763.61" width="3.9" height="16.3"/><rect x="1229.2" y="768.91" width="3.9" height="11"/></g><circle cx="1531.2" cy="769.01" r="8.6" stroke="#1a7f2b" stroke-width="1.15"/><path d="M1527 769.26 L1529.8 771.76 L1535.8 765.86" stroke="#1a7f2b" stroke-width="1.15"/><g transform="translate(1687.40 763.61)" fill="none" stroke="#12404f" stroke-width="1.55" stroke-linecap="round"><circle cx="4.3" cy="4.2" r="2.9"/><path d="M6.6 2.2 L8.1 1.6"/><path d="M2.4 7 C0.6 8 1.2 9.6 3 9.5 L6.4 9.5 C9.4 9.8 9 13.4 4.6 13.4 C0.4 13.4 0.2 10.6 2.2 9.6"/><circle cx="13.9" cy="4.3" r="3.1"/><path d="M19.2 1.6 L21.9 0.7 V7.6 M19 7.8 H25"/></g><path d="M474.4 816.03 H492.3 V826.53 H474.4 Z M483.3 826.88 V828.48 M480.1 828.78 H486.6" stroke="#201f1e" stroke-width="1.2"/><g fill="#126dd8"><rect x="1213.9" y="827.58" width="3.9" height="5.8"/><rect x="1219" y="822.38" width="3.9" height="11"/><rect x="1224.1" y="817.08" width="3.9" height="16.3"/><rect x="1229.2" y="822.38" width="3.9" height="11"/></g><circle cx="1531.2" cy="822.48" r="8.6" stroke="#1a7f2b" stroke-width="1.15"/><path d="M1527 822.73 L1529.8 825.23 L1535.8 819.33" stroke="#1a7f2b" stroke-width="1.15"/><g transform="translate(1687.40 817.08)" fill="none" stroke="#12404f" stroke-width="1.55" stroke-linecap="round"><circle cx="4.3" cy="4.2" r="2.9"/><path d="M6.6 2.2 L8.1 1.6"/><path d="M2.4 7 C0.6 8 1.2 9.6 3 9.5 L6.4 9.5 C9.4 9.8 9 13.4 4.6 13.4 C0.4 13.4 0.2 10.6 2.2 9.6"/><circle cx="13.9" cy="4.3" r="3.1"/><path d="M19.2 1.6 L21.9 0.7 V7.6 M19 7.8 H25"/></g><path d="M474.4 869.50 H492.3 V880.00 H474.4 Z M483.3 880.35 V881.95 M480.1 882.25 H486.6" stroke="#201f1e" stroke-width="1.2"/><g fill="#126dd8"><rect x="1213.9" y="881.05" width="3.9" height="5.8"/><rect x="1219" y="875.85" width="3.9" height="11"/><rect x="1224.1" y="870.55" width="3.9" height="16.3"/><rect x="1229.2" y="875.85" width="3.9" height="11"/></g><circle cx="1531.2" cy="875.95" r="8.6" stroke="#1a7f2b" stroke-width="1.15"/><path d="M1527 876.20 L1529.8 878.70 L1535.8 872.80" stroke="#1a7f2b" stroke-width="1.15"/><g transform="translate(1687.40 870.55)" fill="none" stroke="#12404f" stroke-width="1.55" stroke-linecap="round"><circle cx="4.3" cy="4.2" r="2.9"/><path d="M6.6 2.2 L8.1 1.6"/><path d="M2.4 7 C0.6 8 1.2 9.6 3 9.5 L6.4 9.5 C9.4 9.8 9 13.4 4.6 13.4 C0.4 13.4 0.2 10.6 2.2 9.6"/><circle cx="13.9" cy="4.3" r="3.1"/><path d="M19.2 1.6 L21.9 0.7 V7.6 M19 7.8 H25"/></g><path d="M474.4 922.97 H492.3 V933.47 H474.4 Z M483.3 933.82 V935.42 M480.1 935.72 H486.6" stroke="#201f1e" stroke-width="1.2"/><g fill="#126dd8"><rect x="1213.9" y="934.52" width="3.9" height="5.8"/><rect x="1219" y="929.32" width="3.9" height="11"/><rect x="1224.1" y="924.02" width="3.9" height="16.3"/><rect x="1229.2" y="929.32" width="3.9" height="11"/></g><circle cx="1531.2" cy="929.42" r="8.6" stroke="#1a7f2b" stroke-width="1.15"/><path d="M1527 929.67 L1529.8 932.17 L1535.8 926.27" stroke="#1a7f2b" stroke-width="1.15"/><g transform="translate(1687.40 924.02)" fill="none" stroke="#12404f" stroke-width="1.55" stroke-linecap="round"><circle cx="4.3" cy="4.2" r="2.9"/><path d="M6.6 2.2 L8.1 1.6"/><path d="M2.4 7 C0.6 8 1.2 9.6 3 9.5 L6.4 9.5 C9.4 9.8 9 13.4 4.6 13.4 C0.4 13.4 0.2 10.6 2.2 9.6"/><circle cx="13.9" cy="4.3" r="3.1"/><path d="M19.2 1.6 L21.9 0.7 V7.6 M19 7.8 H25"/></g><path d="M474.4 976.44 H492.3 V986.94 H474.4 Z M483.3 987.29 V988.89 M480.1 989.19 H486.6" stroke="#201f1e" stroke-width="1.2"/><g fill="#126dd8"><rect x="1213.9" y="987.99" width="3.9" height="5.8"/><rect x="1219" y="982.79" width="3.9" height="11"/><rect x="1224.1" y="977.49" width="3.9" height="16.3"/><rect x="1229.2" y="982.79" width="3.9" height="11"/></g><circle cx="1531.2" cy="982.89" r="8.6" stroke="#1a7f2b" stroke-width="1.15"/><path d="M1527 983.14 L1529.8 985.64 L1535.8 979.74" stroke="#1a7f2b" stroke-width="1.15"/><g transform="translate(1687.40 977.49)" fill="none" stroke="#12404f" stroke-width="1.55" stroke-linecap="round"><circle cx="4.3" cy="4.2" r="2.9"/><path d="M6.6 2.2 L8.1 1.6"/><path d="M2.4 7 C0.6 8 1.2 9.6 3 9.5 L6.4 9.5 C9.4 9.8 9 13.4 4.6 13.4 C0.4 13.4 0.2 10.6 2.2 9.6"/><circle cx="13.9" cy="4.3" r="3.1"/><path d="M19.2 1.6 L21.9 0.7 V7.6 M19 7.8 H25"/></g><path d="M474.4 1029.91 H492.3 V1040.41 H474.4 Z M483.3 1040.76 V1042.36 M480.1 1042.66 H486.6" stroke="#201f1e" stroke-width="1.2"/><g fill="#126dd8"><rect x="1213.9" y="1041.46" width="3.9" height="5.8"/><rect x="1219" y="1036.26" width="3.9" height="11"/><rect x="1224.1" y="1030.96" width="3.9" height="16.3"/><rect x="1229.2" y="1036.26" width="3.9" height="11"/></g><circle cx="1531.2" cy="1036.36" r="8.6" stroke="#1a7f2b" stroke-width="1.15"/><path d="M1527 1036.61 L1529.8 1039.11 L1535.8 1033.21" stroke="#1a7f2b" stroke-width="1.15"/><g transform="translate(1687.40 1030.96)" fill="none" stroke="#12404f" stroke-width="1.55" stroke-linecap="round"><circle cx="4.3" cy="4.2" r="2.9"/><path d="M6.6 2.2 L8.1 1.6"/><path d="M2.4 7 C0.6 8 1.2 9.6 3 9.5 L6.4 9.5 C9.4 9.8 9 13.4 4.6 13.4 C0.4 13.4 0.2 10.6 2.2 9.6"/><circle cx="13.9" cy="4.3" r="3.1"/><path d="M19.2 1.6 L21.9 0.7 V7.6 M19 7.8 H25"/></g></g></svg>
<svg style="left:0;top:0" width="1920" height="1080">
<path d="M1892 334.8 L1898.5 328.2 L1905 334.8Z" fill="#a3a3a3"/>
<path d="M1892 1036 L1898.5 1042.8 L1905 1036Z" fill="#8b8b8b"/>
<rect x="1893" y="345" width="11" height="314" rx="5.5" fill="#8b8b8b"/>
</svg>
<div class="a" style="left:0;top:0;width:1920px;height:1080px;box-shadow:inset 0 0 0 1px rgba(0,0,0,.28);pointer-events:none"></div>
</body></html>
